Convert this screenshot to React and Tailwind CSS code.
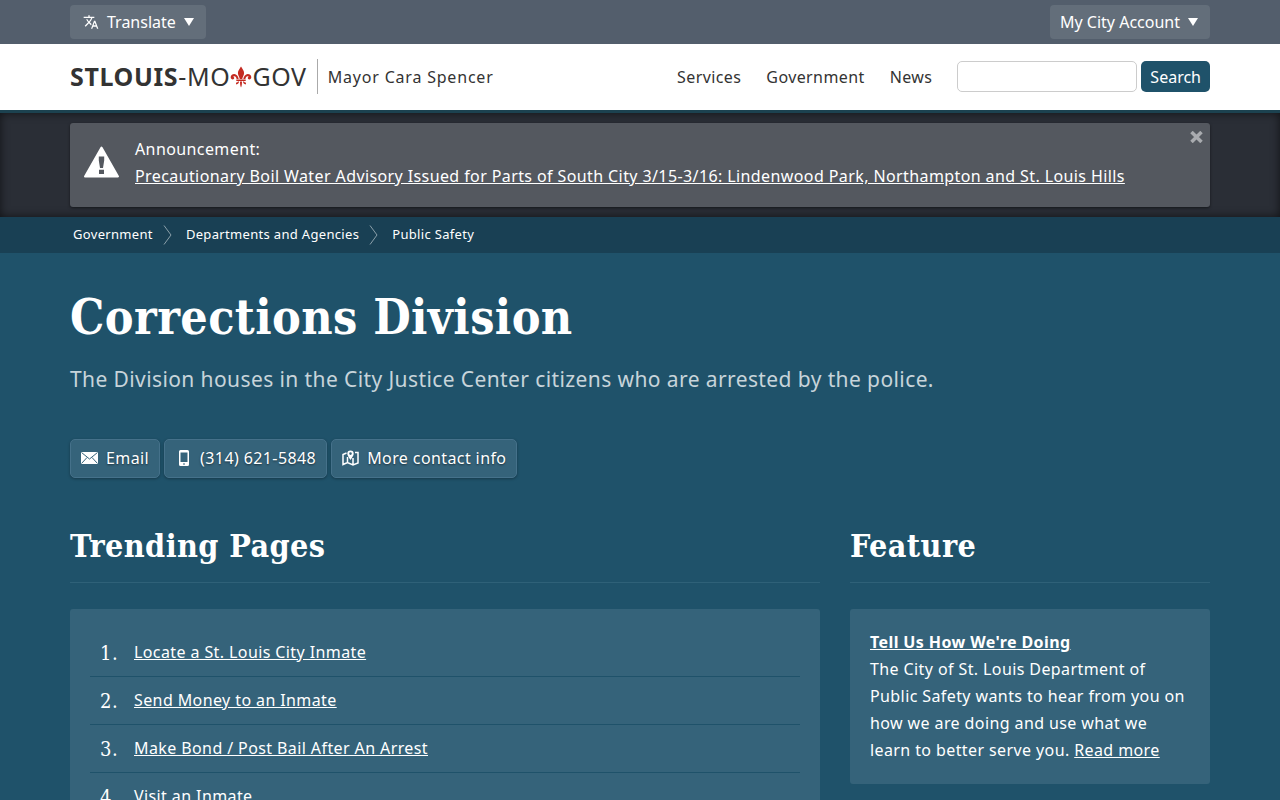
import { MdTranslate } from 'react-icons/md';

const navLinks = ['Services', 'Government', 'News'];

const breadcrumbs = ['Government', 'Departments and Agencies', 'Public Safety'];

const trendingPages = [
  'Locate a St. Louis City Inmate',
  'Send Money to an Inmate',
  'Make Bond / Post Bail After An Arrest',
  'Visit an Inmate',
  'Inmate Mail',
];

function Container({ className = '', children }) {
  return <div className={`mx-auto w-full max-w-[1140px] ${className}`}>{children}</div>;
}

function Caret() {
  return (
    <svg width="10" height="8" viewBox="0 0 10 8" fill="currentColor" aria-hidden="true">
      <path d="M0 0h10L5 8z" />
    </svg>
  );
}

function FleurDeLis() {
  return (
    <svg width="22" height="22" viewBox="0 0 22 22" fill="#c42b22" aria-hidden="true">
      <path d="M11 .5c1.200 2.300 3.100 3.900 3.100 6.500 0 2.300-1.500 3.900-1.900 6H9.800C9.400 10.900 7.900 9.300 7.900 7 7.900 4.400 9.800 2.800 11 .5z" />
      <path d="M8.700 13C8.200 10 6.500 7.900 4.300 7.900 2 7.900.7 9.500.7 11.200c0 1.300.9 2.200 2 2.200.9 0 1.500-.6 1.500-1.400 0-.7-.5-1.100-1-1.200.2-.4.7-.6 1.200-.5 1.400.2 2 1.300 2.200 2.700z" />
      <path d="M13.300 13c.5-3 2.200-5.100 4.400-5.100 2.300 0 3.600 1.600 3.600 3.300 0 1.300-.9 2.200-2 2.200-.9 0-1.500-.6-1.500-1.400 0-.7.500-1.100 1-1.200-.2-.4-.7-.6-1.200-.5-1.400.2-2 1.300-2.200 2.700z" />
      <path d="M6.300 13.500h9.400v1.500H6.300z" />
      <path d="M10 15.500h2c0 2.300-.2 4.500-1 6-.8-1.500-1-3.700-1-6z" />
      <path d="M9.100 15.500c-.2 1.500-1.200 2.600-2.700 3-.5-.6-.6-1.500-.1-2 .7.100 1.400-.2 1.700-1zM12.900 15.500c.2 1.500 1.200 2.600 2.700 3 .5-.6.6-1.500.1-2-.7.100-1.400-.2-1.700-1z" />
    </svg>
  );
}

function WarningIcon() {
  return (
    <svg width="37" height="32" viewBox="0 0 37 32" aria-hidden="true">
      <path d="M18.500 1.500 35 30.500H2z" fill="#fff" stroke="#fff" strokeWidth="2" strokeLinejoin="round" />
      <path d="M15.800 10.500h5.400v4l-1.200 7.500h-3l-1.200-7.500zM16 23.800h5v4.200h-5z" fill="#54585f" />
    </svg>
  );
}

function EnvelopeIcon() {
  return (
    <svg width="17" height="12" viewBox="0 0 17 12" aria-hidden="true">
      <path d="M0 0h17v12H0z" fill="#fff" />
      <path d="M.5.500l8 6.500 8-6.500M.5 11.500 6 5.500M16.500 11.500 11 5.500" fill="none" stroke="#35637a" />
    </svg>
  );
}

function PhoneIcon() {
  return (
    <svg width="10" height="16" viewBox="0 0 10 16" aria-hidden="true">
      <path
        d="M1.500 0h7A1.500 1.500 0 0 1 10 1.500v13A1.500 1.500 0 0 1 8.500 16h-7A1.500 1.500 0 0 1 0 14.500v-13A1.500 1.500 0 0 1 1.500 0zM1.500 2.500V12h7V2.500zM4 13.500v1h2v-1z"
        fill="#fff"
        fillRule="evenodd"
      />
    </svg>
  );
}

function MapIcon() {
  return (
    <svg width="17" height="16" viewBox="0 0 17 16" fill="none" stroke="#fff" strokeWidth="1.500" aria-hidden="true">
      <path d="M4.500 3 1 4.500v10L5.500 12.500l5.500 2.500 5-2V2.500h-3M5.500 7v5.500M11 8v7" />
      <path
        d="M8.500 10C6.500 7 5.300 5.300 5.300 3.700a3.200 3.200 0 0 1 6.400 0c0 1.600-1.200 3.300-3.200 6.300zM8.500 2.300a1.300 1.300 0 1 0 0 2.600 1.300 1.300 0 0 0 0-2.600z"
        fill="#fff"
        fillRule="evenodd"
        stroke="none"
      />
    </svg>
  );
}

function TopButton({ children }) {
  return (
    <button className="flex h-[34px] items-center gap-2 rounded bg-[#636e7a] pr-3 pl-[10px] tracking-normal text-white">
      {children}
    </button>
  );
}

function ContactLink({ icon, children }) {
  return (
    <a
      href="#contact"
      className="flex h-[39px] items-center gap-2 rounded-[5px] border border-[#45718a] bg-[#35637a] px-[10px] pb-[2px] shadow-[0_1px_3px_rgba(0,0,0,0.3)] text-shadow-[0_1px_2px_rgba(0,0,0,0.5)]"
    >
      <span className="flex w-[17px] justify-center">{icon}</span>
      {children}
    </a>
  );
}

function SectionTitle({ children }) {
  return (
    <h2 className="mb-[26px] border-b border-[#2f6178] pb-3 font-['DejaVu_Serif_Condensed','DejaVu_Serif',serif] text-[32px] leading-[48px] font-bold">
      {children}
    </h2>
  );
}

function App() {
  return (
    <div className="min-h-screen bg-[#1f526a] font-['Noto_Sans',sans-serif] text-base tracking-wide text-white">
      <div className="bg-[#535e6c]">
        <Container className="flex h-11 items-center justify-between">
          <TopButton>
            <MdTranslate size={16} className="ml-[3px]" />
            Translate
            <Caret />
          </TopButton>
          <TopButton>
            My City Account
            <Caret />
          </TopButton>
        </Container>
      </div>

      <header className="border-b-3 border-[#1c4250] bg-white text-[#333]">
        <Container className="flex h-[66px] items-center pb-px">
          <a href="#home" className="flex items-center text-[25px] tracking-wide">
            <span className="font-bold">STLOUIS</span>
            <span>-MO</span>
            <FleurDeLis />
            <span>GOV</span>
          </a>
          <a
            href="#mayor"
            className="ml-[10px] flex h-[35px] items-center border-l border-[#aaa] pl-[10px] tracking-wider"
          >
            Mayor Cara Spencer
          </a>
          <nav className="mr-[25px] ml-auto flex gap-[25px]">
            {navLinks.map((link) => (
              <a key={link} href="#nav">
                {link}
              </a>
            ))}
          </nav>
          <form className="flex gap-1" onSubmit={(e) => e.preventDefault()}>
            <input
              type="text"
              aria-label="Search"
              className="h-[31px] w-[180px] rounded-[5px] border border-[#ccc] bg-white px-2"
            />
            <button className="h-[31px] rounded-[5px] bg-[#1f526a] px-[9px] tracking-normal text-white">Search</button>
          </form>
        </Container>
      </header>

      <div className="bg-[#2a2e36] py-[10px] shadow-[inset_0_0_10px_rgba(0,0,0,0.6)]">
        <Container className="flex h-[84px] items-start rounded-[3px] bg-[#54585f] shadow-[0_1px_3px_rgba(0,0,0,0.5)]">
          <div className="mt-[23px] ml-[13px]">
            <WarningIcon />
          </div>
          <div className="mt-[13px] ml-[15px] flex-1 leading-[27px]">
            <p>Announcement:</p>
            <a href="#advisory" className="underline">
              Precautionary Boil Water Advisory Issued for Parts of South City 3/15-3/16: Lindenwood Park, Northampton
              and St. Louis Hills
            </a>
          </div>
          <button aria-label="Close" className="mt-2 mr-[7px] text-[#a9abaf]">
            <svg width="13" height="12" viewBox="0 0 13 12" stroke="currentColor" strokeWidth="3.500">
              <path d="M1.500 1l10 10M11.500 1l-10 10" />
            </svg>
          </button>
        </Container>
      </div>

      <div className="bg-[#194054]">
        <Container className="flex h-9 items-center pl-[3px] text-[13px] tracking-wide">
          {breadcrumbs.map((crumb, i) => (
            <div key={crumb} className="flex items-center">
              {i > 0 && (
                <svg
                  width="9"
                  height="20"
                  viewBox="0 0 9 20"
                  className="mr-[14px] ml-[10px]"
                  fill="none"
                  stroke="#8ca0aa"
                  aria-hidden="true"
                >
                  <path d="M1 .5l7 9.500-7 9.500" />
                </svg>
              )}
              <a href="#crumb">{crumb}</a>
            </div>
          ))}
        </Container>
      </div>

      <Container className="pt-8">
        <h1 className="font-['DejaVu_Serif_Condensed','DejaVu_Serif',serif] text-5xl leading-[64px] font-bold">
          Corrections Division
        </h1>
        <p className="mt-3 text-[21px] leading-9 text-[#c7d4da]">
          The Division houses in the City Justice Center citizens who are arrested by the police.
        </p>

        <div className="mt-[42px] flex gap-1">
          <ContactLink icon={<EnvelopeIcon />}>Email</ContactLink>
          <ContactLink icon={<PhoneIcon />}>(314) 621-5848</ContactLink>
          <ContactLink icon={<MapIcon />}>More contact info</ContactLink>
        </div>

        <div className="mt-11 grid grid-cols-[1fr_360px] gap-[30px]">
          <section>
            <SectionTitle>Trending Pages</SectionTitle>
            <ol className="rounded-[3px] bg-[#35637a] p-5">
              {trendingPages.map((page, i) => (
                <li key={page} className="flex h-12 items-center border-b border-[#1f526a] last:border-b-0">
                  <span className="w-7 text-right font-['DejaVu_Serif_Condensed','DejaVu_Serif',serif] text-xl">
                    {i + 1}.
                  </span>
                  <a href="#page" className="ml-4 pb-[2px] underline">
                    {page}
                  </a>
                </li>
              ))}
            </ol>
          </section>
          <section>
            <SectionTitle>Feature</SectionTitle>
            <div className="rounded-[3px] bg-[#35637a] p-5 leading-[27px]">
              <a href="#survey" className="font-bold underline">
                Tell Us How We're Doing
              </a>
              <p>
                The City of St. Louis Department of Public Safety wants to hear from you on how we are doing and use
                what we learn to better serve you.{' '}
                <a href="#more" className="underline">
                  Read more
                </a>
              </p>
            </div>
          </section>
        </div>
      </Container>
    </div>
  );
}

export default App;
